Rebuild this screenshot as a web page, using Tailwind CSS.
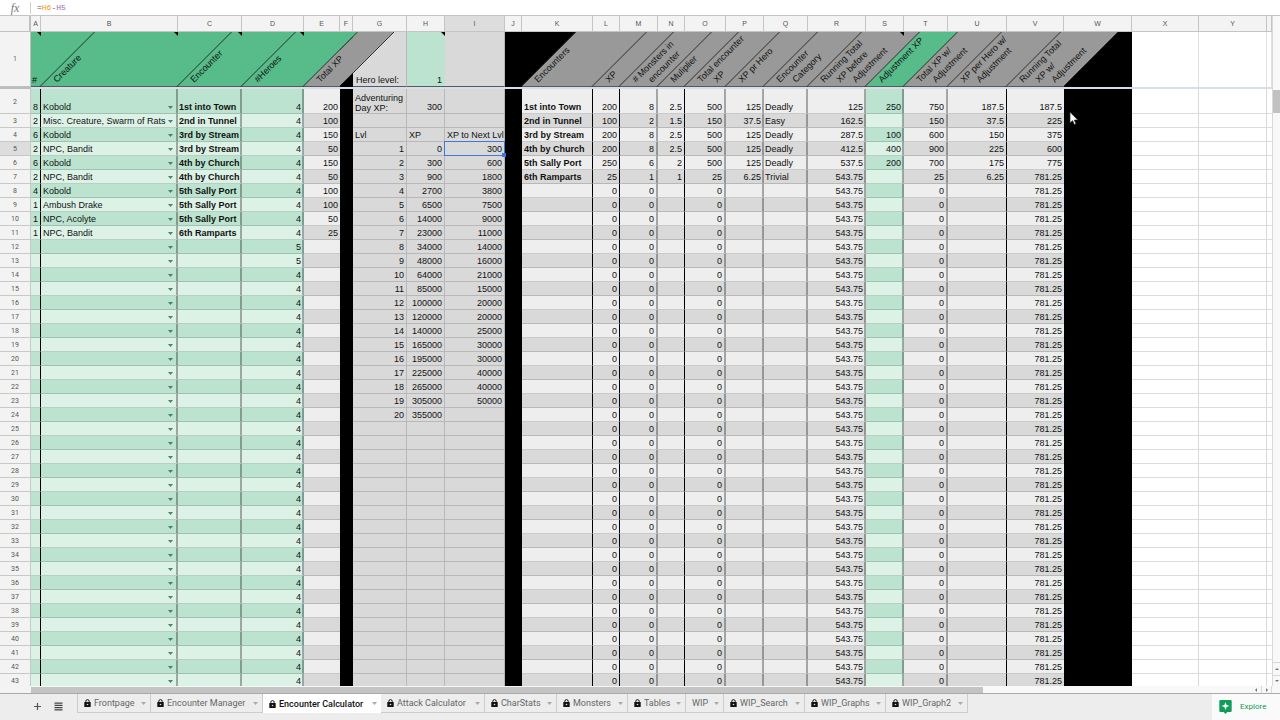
<!DOCTYPE html>
<html lang="en">
<head>
<meta charset="utf-8">
<title>Encounter Calculator</title>
<script src="https://cdn.jsdelivr.net/npm/@tailwindcss/browser@4"></script>
</head>
<body class="flex h-screen flex-col overflow-hidden bg-white font-['Liberation_Sans',Arial,sans-serif] text-[9px] text-[#111]">

<header class="flex h-4 shrink-0 items-center border-b border-[#c4c4c4] bg-white">
  <div class="flex h-3 w-[31px] items-center justify-center border-r border-[#d0d0d0] font-['Liberation_Serif',serif] text-[12px] leading-3 text-[#777] italic">fx</div>
  <div role="textbox" aria-label="Formula" contenteditable="true" spellcheck="false" class="flex-1 pl-[6px] font-['Liberation_Mono',monospace] text-[8px] leading-3 text-[#555] outline-none"><span>=</span><span class="text-[#f7981d]">H6</span><span>-</span><span class="text-[#9a6cc0]">H5</span></div>
</header>

<main class="flex min-h-0 flex-1">
  <div class="relative min-w-0 flex-1 overflow-hidden">
    <table class="w-full table-fixed border-separate border-spacing-0">
      <colgroup id="cols"></colgroup>
      <thead id="head"></thead>
      <tbody id="rows"></tbody>
    </table>
    <svg class="pointer-events-none absolute top-[95px] left-[1069px] h-[15px] w-[10px]" viewBox="0 0 10 15" aria-hidden="true"><path d="M1 1v11l2.600-2.300 1.700 3.800 1.700-.7-1.700-3.700H8.800z" fill="#fff" stroke="#222" stroke-width=".7"/></svg>
  </div>
  <div class="flex w-2 shrink-0 flex-col border-l border-[#d8d8d8] bg-[#f8f8f8]">
    <div class="mt-[74px] h-[23px] bg-[#c1c1c1]"></div>
    <div class="flex-1"></div>
    <button aria-label="Scroll up" class="flex h-[13px] items-center justify-center border-t border-[#d8d8d8]"><svg class="h-1 w-1" viewBox="0 0 4 4"><path d="M0 3l2-2 2 2z" fill="#777"/></svg></button>
    <button aria-label="Scroll down" class="flex h-[11px] items-center justify-center border-t border-[#d8d8d8]"><svg class="h-1 w-1" viewBox="0 0 4 4"><path d="M0 1l2 2 2-2z" fill="#777"/></svg></button>
  </div>
</main>

<div class="flex h-[7px] shrink-0 bg-[#f8f8f8]">
  <div class="w-[31px] bg-[#f3f3f3]"></div>
  <div class="mt-px w-[952px] bg-[#c4c4c4]"></div>
  <div class="flex-1"></div>
  <button aria-label="Scroll left" class="flex w-[11px] items-center justify-center"><svg class="h-1 w-1" viewBox="0 0 4 4"><path d="M3 0L1 2l2 2z" fill="#777"/></svg></button>
  <button aria-label="Scroll right" class="flex w-[11px] items-center justify-center border-x border-[#d8d8d8]"><svg class="h-1 w-1" viewBox="0 0 4 4"><path d="M1 0l2 2-2 2z" fill="#777"/></svg></button>
  <div class="w-2"></div>
</div>

<footer class="flex h-[27px] shrink-0 border-t border-[#aaa] bg-[#ededed] font-[Roboto,sans-serif]">
  <div class="flex w-[77px] items-center gap-[12px] pb-[4px] pl-[33px]">
    <button aria-label="Add sheet" class="mt-[2px]"><svg class="size-[9px]" viewBox="0 0 9 9"><path d="M4.500 1v7M1 4.500h7" stroke="#555" stroke-width="1.200"/></svg></button>
    <button aria-label="All sheets" class="mt-[2px]"><svg class="size-[9px]" viewBox="0 0 9 9"><path d="M.5 1.200h8M.5 3.400h8M.5 5.600h8M.5 7.800h8" stroke="#444" stroke-width="1.200"/></svg></button>
  </div>
  <nav id="tabs" aria-label="Sheets" class="flex h-[19px]"></nav>
  <div class="flex-1"></div>
  <button class="flex w-[68px] items-center gap-[8px] bg-[#fafafa] pl-[7px] text-[8px] text-[#0f9d58]">
    <svg class="h-[14px] w-[13px]" viewBox="0 0 13 14"><path d="M1.500 0h10A1.200 1.200 0 0 1 12.700 1.200v9.600a1.200 1.200 0 0 1-1.200 1.200H8.300L6.500 14 4.700 12H1.500A1.200 1.200 0 0 1 .3 10.800V1.200A1.200 1.200 0 0 1 1.500 0z" fill="#0f9d58"/><path d="M6.500 2l1.100 2.900L10.500 6 7.600 7.100 6.500 10 5.400 7.100 2.500 6l2.900-1.100z" fill="#fff"/></svg>
    Explore
  </button>
</footer>

<script>
const SHARP = 'border-r border-r-black ';
const SOFT = 'border-r-2 border-r-black/30 ';
const LIGHT = 'border-r border-r-black/15 ';
const NONE = '';
// letter, width, kind of fill, right edge, alignment
const COLS = [
  ['A',10,'green',SHARP,'r'],['B',137,'green',SOFT,'l'],['C',64,'green',SOFT,'b'],['D',62,'green',SOFT,'t'],
  ['E',36,'grey',NONE,'r'],['F',13,'black',NONE,'l'],['G',54,'flat',LIGHT,'r'],['H',38,'flat',LIGHT,'r'],
  ['I',60,'flat',LIGHT,'r'],['J',17,'black',NONE,'l'],['K',71,'grey',SHARP,'b'],['L',27,'grey',SHARP,'r'],
  ['M',38,'grey',SOFT,'r'],['N',27,'grey',SHARP,'r'],['O',41,'grey',SOFT,'r'],['P',38,'grey',SOFT,'t'],
  ['Q',44,'grey',SOFT,'q'],['R',58,'grey',SOFT,'t'],['S',38,'green',SOFT,'t'],['T',44,'grey',SOFT,'r'],
  ['U',59,'grey',SHARP,'r'],['V',57,'grey',NONE,'r'],['W',68,'black',NONE,'l'],['X',67,'white',LIGHT,'l'],
  ['Y',68,'white',LIGHT,'l'],['',0,'white',NONE,'l']
];
const TITLES = {
  B:['Creature'],C:['Encounter'],D:['#Heroes'],E:['Total XP'],K:['Encounters'],L:['XP'],
  M:['# Monsters in','encounter'],N:['Muliplier'],O:['Total encounter','XP'],P:['XP pr Hero'],
  Q:['Encounter','Category'],R:['Running Total','XP before','Adjustment'],S:['Adjustment XP'],
  T:['Total XP w/','Adjustment'],U:['XP per Hero w/','Adjustment'],V:['Running Total','XP w/','Adjustment']
};
const HEADBG = {green:'bg-[#57bb8a] ',grey:'bg-[#999] ',flat:'bg-[#d9d9d9] ',black:'bg-black ',white:'bg-white '};
const NOTES = 'ABCDHS';
const creatures = [
  [8,'Kobold','1st into Town',200],[2,'Misc. Creature, Swarm of Rats','2nd in Tunnel',100],[6,'Kobold','3rd by Stream',150],
  [2,'NPC, Bandit','3rd by Stream',50],[6,'Kobold','4th by Church',150],[2,'NPC, Bandit','4th by Church',50],
  [4,'Kobold','5th Sally Port',100],[1,'Ambush Drake','5th Sally Port',100],[1,'NPC, Acolyte','5th Sally Port',50],[1,'NPC, Bandit','6th Ramparts',25]
];
const totals = [0,300,900,2700,6500,14000,23000,34000,48000,64000,85000,100000,120000,140000,165000,195000,225000,265000,305000,355000];
const encounters = [
  ['1st into Town',200,8,2.5,500,125,'Deadly',125,250,750,187.5,187.5],
  ['2nd in Tunnel',100,2,1.5,150,37.5,'Easy',162.5,'',150,37.5,225],
  ['3rd by Stream',200,8,2.5,500,125,'Deadly',287.5,100,600,150,375],
  ['4th by Church',200,8,2.5,500,125,'Deadly',412.5,400,900,225,600],
  ['5th Sally Port',250,6,2,500,125,'Deadly',537.5,200,700,175,775],
  ['6th Ramparts',25,1,1,25,6.25,'Trivial',543.75,'',25,6.25,781.25]
];

function value(c, r) {
  if (!c) return '';
  const cr = creatures[r - 2];
  if (c === 'A') return cr ? cr[0] : '';
  if (c === 'B') return cr ? cr[1] : '';
  if (c === 'C') return cr ? cr[2] : '';
  if (c === 'D') return r === 12 || r === 13 ? 5 : 4;
  if (c === 'E') return cr ? cr[3] : '';
  if (r === 2 && c === 'G') return 'Adventuring<br>Day XP:';
  if (r === 2 && c === 'H') return 300;
  if (r === 4 && 'GHI'.includes(c)) return {G:'Lvl',H:'XP',I:'XP to Next Lvl'}[c];
  const n = r - 5;
  if ('GHI'.includes(c)) {
    if (n < 0 || n > 19) return '';
    if (c === 'G') return n + 1;
    if (c === 'H') return totals[n];
    return n < 19 ? totals[n + 1] - totals[n] : '';
  }
  const i = 'KLMNOPQRSTUV'.indexOf(c);
  if (i < 0) return '';
  if (encounters[r - 2]) return encounters[r - 2][i];
  return {L:0,M:0,O:0,T:0,R:543.75,V:781.25}[c] ?? '';
}
function fill(kind, even) {
  if (kind === 'green') return even ? 'bg-[#bbe3d0] ' : 'bg-[#ddf2e7] ';
  if (kind === 'grey') return even ? 'bg-[#eeeeee] ' : 'bg-[#d9d9d9] ';
  return {flat:'bg-[#d9d9d9] ',black:'bg-black ',white:'bg-white '}[kind];
}

document.getElementById('cols').innerHTML = '<col style="width:31px">' + COLS.map(c => c[1] ? `<col style="width:${c[1]}px">` : '<col>').join('');

let head = '<tr><td class="h-4 border-r-2 border-b border-[#c0c0c0] bg-[#f3f3f3] p-0"></td>';
for (const c of COLS) {
  head += `<th scope="col" class="h-4 border-r border-b border-[#c4c4c4] p-0 text-center text-[7px] leading-[15px] font-normal text-[#555] ${c[0] === 'I' ? 'bg-[#dddddd]' : 'bg-[#f3f3f3]'}">${c[0]}</th>`;
}
head += '</tr><tr><th scope="row" class="h-[55px] border-r border-b border-[#c0c0c0] bg-[#f3f3f3] p-0 text-center font-[Roboto,sans-serif] text-[7px] font-normal text-[#666]">1</th>';
for (const [l, w, kind] of COLS) {
  let inner = '';
  const t = TITLES[l];
  if (t) {
    const color = kind === 'green' ? '#57bb8a' : '#999';
    inner += `<svg class="absolute top-0 left-0 h-full w-full overflow-visible"><polygon points="0,54 54,0 ${w + 54},0 ${w},54" fill="${color}"/><path d="M-1 54.500L53.500 0${l === 'E' || l === 'V' ? `M${w} 54L${w + 54} 0` : ''}" stroke="#111" stroke-width=".8" fill="none"/>`;
    t.forEach((line, i) => { inner += `<text transform="translate(${16 + i * 16} 51) rotate(-45)" font-size="9" fill="#111">${line}</text>`; });
    inner += '</svg>';
  } else if (l === 'A') inner = '#';
  else if (l === 'G') inner = 'Hero level:';
  else if (l === 'H') inner = '1';
  if (l && NOTES.includes(l)) inner += '<span class="absolute top-0 right-0 z-10 size-[4px] bg-black [clip-path:polygon(0_0,100%_0,100%_100%)]"></span>';
  const bg = l === 'K' ? 'bg-black ' : l === 'H' ? 'bg-[#bbe3d0] ' : HEADBG[kind];
  const edge = kind === 'white' ? 'border-r border-r-[#e0e0e0] ' : l === 'G' || l === 'I' ? LIGHT : '';
  const base = kind === 'white' ? '' : kind === 'black' ? 'border-b border-b-black ' : 'border-b border-b-[#555a60] ';
  const align = l === 'H' ? 'justify-end pr-[3px]' : l === 'G' ? 'pl-[3px]' : 'pl-px';
  head += `<td class="h-[55px] p-0 align-top leading-[11px] whitespace-nowrap ${bg}${edge}${base}"><div class="${l === 'G' ? '' : 'relative '}flex h-[54px] items-end ${align}">${l === 'G' ? `<span class="relative">${inner}</span>` : inner}</div></td>`;
}
head += '</tr><tr><td class="h-[2px] bg-[#bcbcbc] p-0"></td><td colspan="26" class="h-[2px] bg-[#d8dee7] p-0"></td></tr>';
document.getElementById('head').innerHTML = head;

let body = '';
for (let r = 2; r <= 43; r++) {
  const h = r === 2 ? 'h-[25px] ' : 'h-[14px] ';
  body += `<tr><th scope="row" class="${h}border-r border-b border-[#c8c8c8] p-0 pt-px text-center font-[Roboto,sans-serif] text-[7px] leading-[12px] font-normal text-[#555] ${r === 5 ? 'bg-[#dddddd]' : 'bg-[#f3f3f3]'}">${r}</th>`;
  for (const [l, w, kind, edge, al] of COLS) {
    let v = value(l, r), a = 'pr-[2px] text-right ';
    if (al === 't') a = 'pr-px text-right ';
    if (al === 'l') a = 'pl-[2px] text-left ';
    if (al === 'q') a = 'pl-px text-left ';
    if (al === 'b') a = (l === 'C' ? 'pl-px ' : 'pl-[2px] ') + 'text-left font-bold ';
    if (l && r === 4 && 'GHI'.includes(l) || r === 2 && l === 'G') a = 'pl-[2px] text-left ';
    let pos = '';
    if (l === 'B') {
      v = `<div class="flex items-center justify-between pr-[2px]"><span>${v}</span><button aria-label="Choose creature, row ${r}" class="flex h-[11px] w-[7px] items-center justify-center"><svg class="h-[3px] w-[5px]" viewBox="0 0 5 3"><path d="M0 0h5L2.500 3z" fill="#43846a"/></svg></button></div>`;
    }
    if (l === 'I' && r === 5) {
      pos = 'relative ';
      v += '<span class="absolute -top-px -right-px -bottom-px -left-px border border-[#3f78d8]"></span><span class="absolute -right-[2px] -bottom-[2px] size-[4px] bg-[#3f78d8]"></span>';
    }
    const line = kind === 'black' ? '' : kind === 'white' ? 'border-b border-b-[#dcdcdc] ' : 'border-b border-b-black/15 ';
    const lead = r === 2 && l === 'G' ? 'leading-[10px] ' : 'leading-[11px] ';
    body += `<td class="${h}p-0 align-bottom whitespace-nowrap ${pos}${lead}${fill(kind, r % 2 === 0)}${edge}${line}${a}">${v}</td>`;
  }
  body += '</tr>';
}
document.getElementById('rows').innerHTML = body;

const TABS = [['Frontpage',74,1],['Encounter Manager',112,1],['Encounter Calculator',118,1],['Attack Calculator',104,1],['CharStats',72,1],['Monsters',71,1],['Tables',58,1],['WIP',38,0],['WIP_Search',81,1],['WIP_Graphs',81,1],['WIP_Graph2',82,1]];
document.getElementById('tabs').innerHTML = TABS.map(([name, w, lock], i) => `
  <button style="width:${w}px" class="flex items-center pl-[6px] text-[9px] leading-[18px] whitespace-nowrap ${i === 2 ? 'bg-white font-medium text-[#111]' : 'border-r border-b border-[#cccccc] text-[#666]'}${i === 0 ? ' border-l' : ''}">
    ${lock ? '<svg class="mr-[3px] h-[8px] w-[7px] shrink-0" viewBox="0 0 7 8"><path d="M1.800 3.500V2.300a1.700 1.700 0 0 1 3.400 0v1.200" fill="none" stroke="#111" stroke-width="1"/><rect x=".3" y="3" width="6.400" height="5" rx=".6" fill="#111"/><circle cx="3.500" cy="5.500" r=".8" fill="#ddd"/></svg>' : ''}
    <span class="flex-1 text-left">${name}</span>
    <svg class="mr-[4px] h-[3px] w-[5px] shrink-0" viewBox="0 0 5 3"><path d="M0 0h5L2.500 3z" fill="#aaa"/></svg>
  </button>`).join('');
</script>
</body>
</html>
